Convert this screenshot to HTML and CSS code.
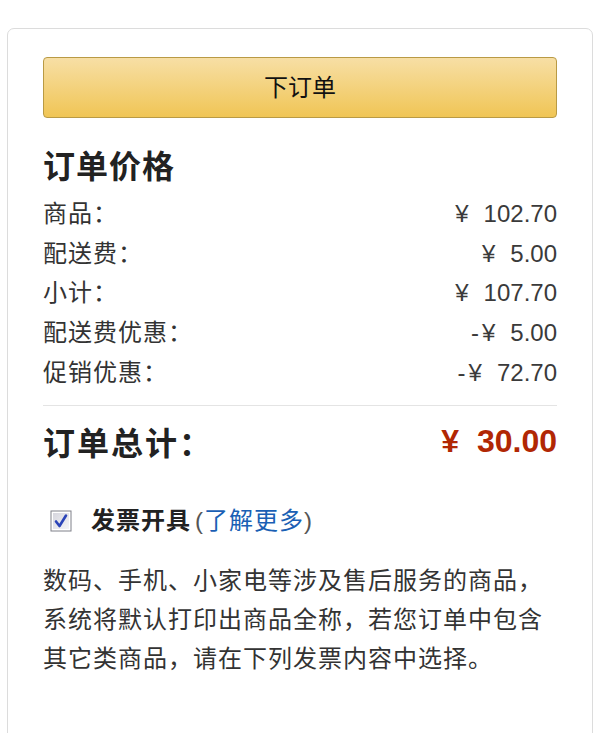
FILE: index.html
```html
<!DOCTYPE html>
<html lang="zh-CN">
<head>
  <meta charset="UTF-8">
  <title>订单价格</title>
  <link rel="stylesheet" href="styles.css">
</head>
<body>

  <!-- 结算框 -->
  <div class="checkout-box">
    <button class="btn-order">下订单</button>

    <h2 class="price-title">订单价格</h2>
    <div class="price-list">
      <div class="price-row"><span>商品：</span><span class="amount"><i class="yen">¥</i>102.70</span></div>
      <div class="price-row"><span>配送费：</span><span class="amount"><i class="yen">¥</i>5.00</span></div>
      <div class="price-row"><span>小计：</span><span class="amount"><i class="yen">¥</i>107.70</span></div>
      <div class="price-row"><span>配送费优惠：</span><span class="amount">-<i class="yen">¥</i>5.00</span></div>
      <div class="price-row"><span>促销优惠：</span><span class="amount">-<i class="yen">¥</i>72.70</span></div>
    </div>

    <div class="total-row">
      <span>订单总计：</span>
      <span class="total-amount"><i class="yen">¥</i>30.00</span>
    </div>

    <!-- 发票 -->
    <label class="invoice">
      <svg class="check" width="22" height="22" viewBox="0 0 22 22">
        <defs>
          <linearGradient id="boxFill" x1="0" y1="0" x2="1" y2="1">
            <stop offset="0" stop-color="#d6d6de"/>
            <stop offset="1" stop-color="#f4f4f7"/>
          </linearGradient>
        </defs>
        <rect x="0.5" y="0.5" width="21" height="21" fill="#7f8089"/>
        <rect x="1.5" y="1.5" width="19" height="19" fill="#fff"/>
        <rect x="3" y="3" width="16" height="16" fill="url(#boxFill)"/>
        <path d="M6 11.5 L9.5 16 L16 5.5" fill="none" stroke="#2b44b8" stroke-width="2.6" stroke-linecap="round" stroke-linejoin="round"/>
      </svg>
      <b>发票开具</b>
      <span class="more">(<a href="#">了解更多</a>)</span>
    </label>

    <p class="invoice-note">数码、手机、小家电等涉及售后服务的商品，系统将默认打印出商品全称，若您订单中包含其它类商品，请在下列发票内容中选择。</p>
  </div>

</body>
</html>
```

FILE: styles.css
```css
body {
  margin: 0;
  background: #fff;
  font-family: "Liberation Sans", "Noto Sans CJK SC", sans-serif;
  color: #333;
}

/* 外框 */
.checkout-box {
  margin: 28px 7px 0;
  padding: 28px 35px 60px;
  border: 1px solid #dcdcdc;
  border-radius: 7px;
  min-height: 700px;
}

/* 黄色按钮 */
.btn-order {
  display: block;
  width: 100%;
  height: 61px;
  padding: 0 0 5px;
  border: 1px solid #b99a44;
  border-radius: 4px;
  background: linear-gradient(#f7dfa5, #f0c555);
  font-family: "Noto Sans CJK SC", sans-serif;
  font-size: 24px;
  color: #111;
  cursor: pointer;
}

.price-title {
  margin: 26px 0 10px;
  font-family: "Noto Sans CJK SC", sans-serif;
  font-size: 32px;
  line-height: 40px;
  letter-spacing: 1px;
  color: #222;
}

.price-row {
  display: flex;
  justify-content: space-between;
  font-size: 24px;
  line-height: 39.7px;
  letter-spacing: 1px;
}

.amount {
  letter-spacing: 0;
  color: #3a3a3a;
}

.yen {
  font-style: normal;
  margin: 0 15px 0 3px;
}

.price-list {
  padding-bottom: 12px;
  border-bottom: 1px solid #e4e4e4;
}

/* 总计 */
.total-row {
  display: flex;
  justify-content: space-between;
  align-items: center;
  margin-top: 15px;
  font-family: "Noto Sans CJK SC", sans-serif;
  font-size: 32px;
  font-weight: bold;
  line-height: 40px;
  letter-spacing: 2px;
  color: #222;
}

.total-amount {
  font-family: "Liberation Sans", sans-serif;
  font-size: 32px;
  letter-spacing: 0;
  color: #b12704;
}

.total-amount .yen {
  margin: 0 18px 0 0;
}

/* 发票开具 */
.invoice {
  display: flex;
  align-items: center;
  margin-top: 42px;
  padding-left: 7px;
  font-size: 24px;
  line-height: 36px;
  letter-spacing: 1px;
  color: #222;
}

.invoice .check {
  margin-right: 19px;
}

.invoice .more {
  margin-left: 4px;
  color: #555;
}

.invoice a {
  color: #1a5fb4;
  text-decoration: none;
}

.invoice-note {
  margin: 22px 0 0;
  font-size: 24px;
  line-height: 39px;
  letter-spacing: 1px;
  color: #333;
}
```
